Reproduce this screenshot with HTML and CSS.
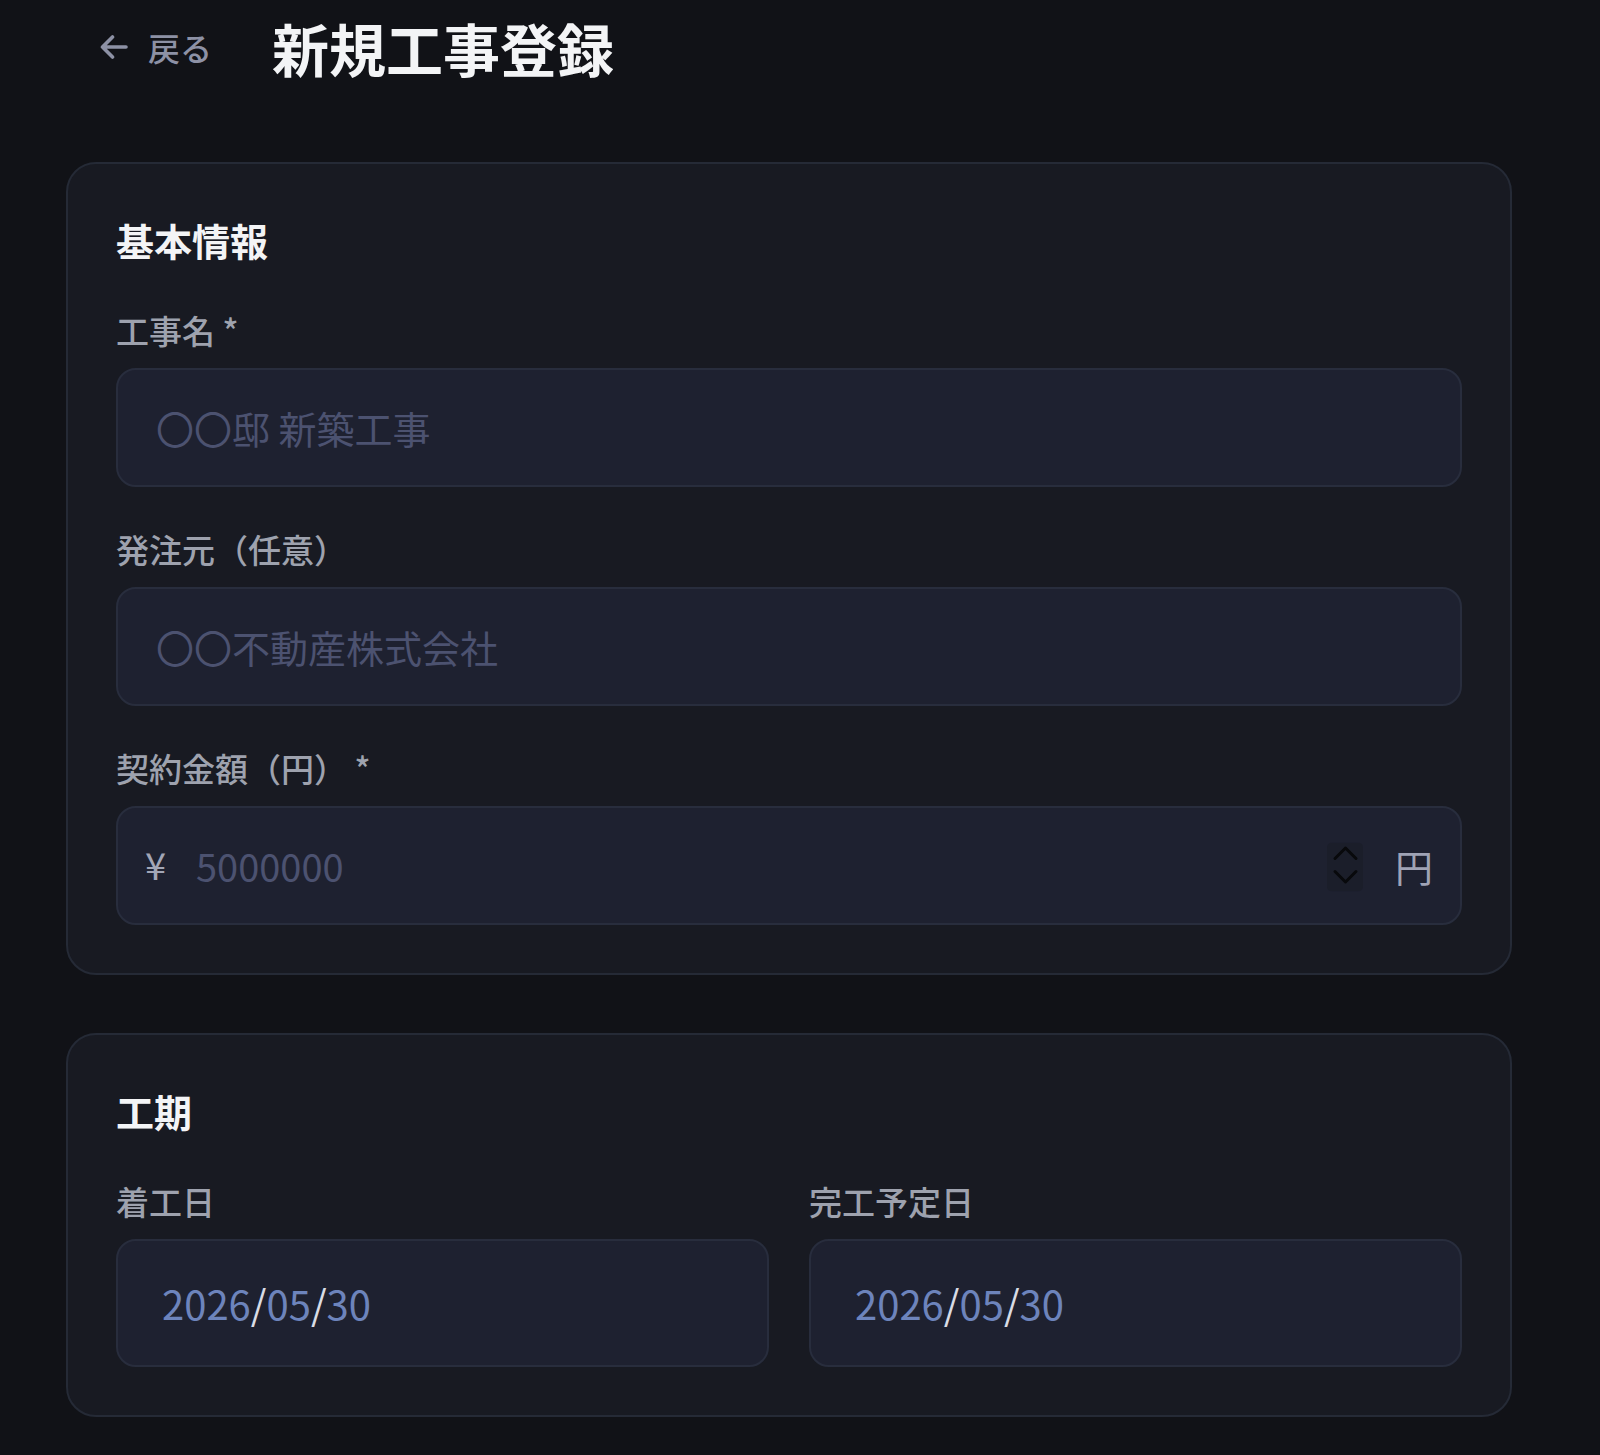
FILE: index.html
```html
<!DOCTYPE html>
<html lang="ja">
<head>
<meta charset="utf-8">
<title>新規工事登録</title>
<link rel="stylesheet" href="styles.css">
</head>
<body>
<div class="page">
  <header class="topbar">
    <a class="back" href="#">
      <svg class="back-icon" viewBox="0 0 28 24" aria-hidden="true"><path d="M26 12H2.5M12.5 2L2.5 12l10 10" fill="none" stroke="currentColor" stroke-width="3.6" stroke-linecap="round" stroke-linejoin="round"/></svg>
      <span>戻る</span>
    </a>
    <h1 class="title">新規工事登録</h1>
  </header>

  <section class="card">
    <h2 class="card-title">基本情報</h2>
    <div class="fields">
      <div class="field">
        <label class="label">工事名 *</label>
        <input class="input" type="text" placeholder="〇〇邸 新築工事">
      </div>
      <div class="field">
        <label class="label">発注元（任意）</label>
        <input class="input" type="text" placeholder="〇〇不動産株式会社">
      </div>
      <div class="field">
        <label class="label">契約金額（円） *</label>
        <div class="money">
          <span class="yen">¥</span>
          <input class="input input-money" type="text" inputmode="numeric" placeholder="5000000">
          <svg class="spinner" viewBox="0 0 36 49" aria-hidden="true"><rect x="0" y="0" width="36" height="49" rx="5" fill="#1b1e2a"/><path d="M8 16L18.5 5.5 29 16M8 29l10.5 10.5L29 29" fill="none" stroke="#08090c" stroke-width="3" stroke-linecap="round" stroke-linejoin="round"/></svg>
          <span class="unit">円</span>
        </div>
      </div>
    </div>
  </section>

  <section class="card">
    <h2 class="card-title">工期</h2>
    <div class="grid2">
      <div class="field">
        <label class="label">着工日</label>
        <div class="input input-date"><span>2026</span><span class="sep">/</span><span>05</span><span class="sep">/</span><span>30</span></div>
      </div>
      <div class="field">
        <label class="label">完工予定日</label>
        <div class="input input-date"><span>2026</span><span class="sep">/</span><span>05</span><span class="sep">/</span><span>30</span></div>
      </div>
    </div>
  </section>
</div>
</body>
</html>
```

FILE: styles.css
```css
* { box-sizing: border-box; }

html, body {
  margin: 0;
  background: #111217;
}

body {
  font-family: "Noto Sans CJK JP", "Noto Sans", sans-serif;
  color: #e5e7eb;
}

.page {
  padding: 0 88px 38px 66px;
}

.topbar {
  height: 94px;
  display: flex;
  align-items: center;
  gap: 60px;
  padding-left: 34px;
  margin-bottom: 68px;
}

.back {
  display: flex;
  align-items: center;
  gap: 20px;
  color: #8d91a5;
  text-decoration: none;
  font-size: 32px;
  font-weight: 500;
  line-height: 1;
}

.back-icon {
  width: 28px;
  height: 24px;
  display: block;
}

.title {
  margin: 0;
  font-size: 57px;
  font-weight: 700;
  line-height: 1;
  color: #f3f4f6;
}

.card {
  background: #181a22;
  border: 2px solid #252a36;
  border-radius: 30px;
  padding: 48px;
}

.card + .card {
  margin-top: 58px;
}

.card-title {
  margin: 0 0 40px;
  font-size: 38px;
  line-height: 56px;
  font-weight: 700;
  color: #f3f4f6;
}

.fields {
  display: flex;
  flex-direction: column;
  gap: 40px;
}

.grid2 {
  display: grid;
  grid-template-columns: 1fr 1fr;
  gap: 40px;
}

.label {
  display: block;
  font-size: 33px;
  line-height: 44px;
  margin-bottom: 16px;
  color: #9ea2ae;
  font-weight: 500;
}

.input {
  display: block;
  width: 100%;
  height: 119px;
  margin: 0;
  background: #1e2130;
  border: 2px solid #282d3d;
  border-radius: 20px;
  padding: 0 38px;
  font-family: inherit;
  font-size: 38px;
  color: #e5e7eb;
  outline: none;
}

.input::placeholder {
  color: #4c5270;
  opacity: 1;
}

.money {
  position: relative;
}

.input-money {
  padding-left: 78px;
  padding-right: 160px;
}

.yen {
  position: absolute;
  left: 29px;
  top: 50%;
  transform: translateY(-54%);
  font-size: 38px;
  line-height: 1;
  color: #a2a6b6;
}

.unit {
  position: absolute;
  right: 29px;
  top: 50%;
  transform: translateY(-50%);
  font-size: 38px;
  line-height: 1;
  color: #9fa3b5;
}

.spinner {
  position: absolute;
  right: 99px;
  top: 50%;
  width: 36px;
  height: 49px;
  transform: translateY(-48%);
}

.input-date {
  height: 128px;
  display: flex;
  align-items: center;
  padding-left: 44px;
  font-size: 40px;
  color: #6d84bc;
}

.input-date .sep {
  color: #d9dce5;
}
```
